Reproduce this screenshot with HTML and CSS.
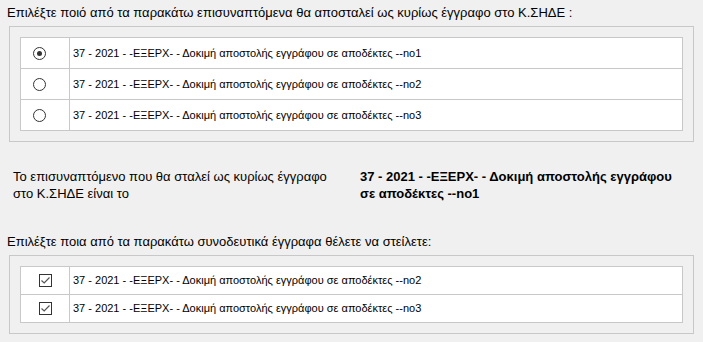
FILE: index.html
```html
<!DOCTYPE html>
<html lang="el">
<head>
    <meta charset="UTF-8">
    <title>Αποστολή στο Κ.ΣΗΔΕ</title>
    <link rel="stylesheet" href="styles.css">
</head>
<body>

<div class="heading">Επιλέξτε ποιό από τα παρακάτω επισυναπτόμενα θα αποσταλεί ως κυρίως έγγραφο στο Κ.ΣΗΔΕ :</div>

<!-- κύριο έγγραφο -->
<div class="panel">
    <table class="doc-list">
        <tr>
            <td class="pick"><span class="radio checked"></span></td>
            <td>37 - 2021 - -ΕΞΕΡΧ- - Δοκιμή αποστολής εγγράφου σε αποδέκτες --no1</td>
        </tr>
        <tr>
            <td class="pick"><span class="radio"></span></td>
            <td>37 - 2021 - -ΕΞΕΡΧ- - Δοκιμή αποστολής εγγράφου σε αποδέκτες --no2</td>
        </tr>
        <tr>
            <td class="pick"><span class="radio"></span></td>
            <td>37 - 2021 - -ΕΞΕΡΧ- - Δοκιμή αποστολής εγγράφου σε αποδέκτες --no3</td>
        </tr>
    </table>
</div>

<div class="summary">
    <div class="summary-label">Το επισυναπτόμενο που θα σταλεί ως κυρίως έγγραφο στο Κ.ΣΗΔΕ είναι το</div>
    <div class="summary-value">37 - 2021 - -ΕΞΕΡΧ- - Δοκιμή αποστολής εγγράφου σε αποδέκτες --no1</div>
</div>

<div class="heading">Επιλέξτε ποια από τα παρακάτω συνοδευτικά έγγραφα θέλετε να στείλετε:</div>

<!-- συνοδευτικά -->
<div class="panel">
    <table class="doc-list short">
        <tr>
            <td class="pick"><span class="check"><svg width="11" height="11" viewBox="0 0 11 11"><path d="M1.5 5.5 L4.2 8 L9.5 2.5" fill="none" stroke="#555" stroke-width="1.2"/></svg></span></td>
            <td>37 - 2021 - -ΕΞΕΡΧ- - Δοκιμή αποστολής εγγράφου σε αποδέκτες --no2</td>
        </tr>
        <tr>
            <td class="pick"><span class="check"><svg width="11" height="11" viewBox="0 0 11 11"><path d="M1.5 5.5 L4.2 8 L9.5 2.5" fill="none" stroke="#555" stroke-width="1.2"/></svg></span></td>
            <td>37 - 2021 - -ΕΞΕΡΧ- - Δοκιμή αποστολής εγγράφου σε αποδέκτες --no3</td>
        </tr>
    </table>
</div>

</body>
</html>
```

FILE: styles.css
```css
/* βασικά */
body {
    margin: 0;
    background-color: #f0f0f0;
    font-family: "Liberation Sans", Arial, sans-serif;
    font-size: 13px;
    line-height: 17px;
    color: #000;
}

.heading {
    padding: 4px 7px 0 7px;
}

/* πλαίσιο με λίστα */
.panel {
    margin: 5px 9px 0 9px;
    border: 1px solid #c8c8c8;
    padding: 10px;
}

.doc-list {
    width: 100%;
    border-collapse: collapse;
    background-color: #fff;
    font-size: 11px;
}

.doc-list td {
    border: 1px solid #c8c8c8;
    height: 30px;
    padding: 0 0 0 3px;
}

.doc-list.short td {
    height: 27px;
}

.doc-list td.pick {
    width: 48px;
    padding: 0;
}

/* radio */
.radio {
    display: block;
    width: 11px;
    height: 11px;
    margin-left: 12px;
    border: 1px solid #333;
    border-radius: 50%;
    background-color: #fff;
    position: relative;
}

.radio.checked::after {
    content: "";
    position: absolute;
    left: 3px;
    top: 3px;
    width: 5px;
    height: 5px;
    border-radius: 50%;
    background-color: #333;
}

/* checkbox */
.check {
    display: block;
    width: 11px;
    height: 11px;
    margin-left: 18px;
    border: 1px solid #333;
    background-color: #fff;
}

.check svg {
    display: block;
}

/* σύνοψη */
.summary {
    display: grid;
    grid-template-columns: 330px 320px;
    column-gap: 17px;
    padding: 26px 0 0 13px;
    margin-bottom: 27px;
}

.summary-value {
    font-weight: bold;
}
```
